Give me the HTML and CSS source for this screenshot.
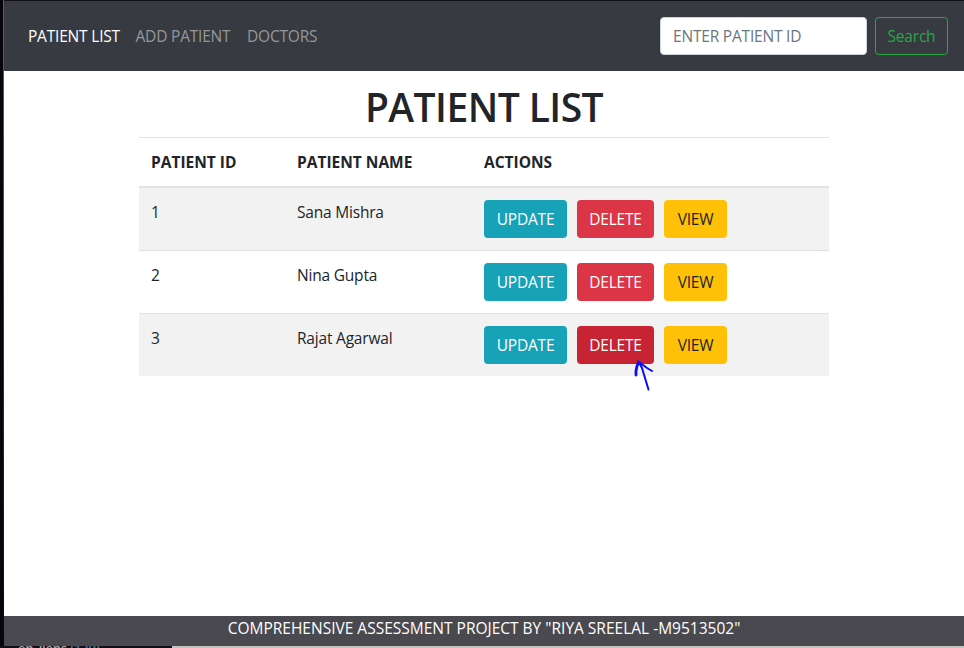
FILE: index.html
```html
<!DOCTYPE html>
<html lang="en">
<head>
<meta charset="utf-8">
<title>Patient List</title>
<link rel="stylesheet" href="styles.css">
</head>
<body>
<div class="edge"></div>
<div class="app">
  <nav class="navbar">
    <div class="links">
      <a class="active">PATIENT LIST</a>
      <a class="add">ADD PATIENT</a>
      <a class="doctors">DOCTORS</a>
    </div>
    <form class="search">
      <input type="text" placeholder="ENTER PATIENT ID">
      <button type="button" class="btn btn-search">Search</button>
    </form>
  </nav>
  <main>
    <h1>PATIENT LIST</h1>
    <table>
      <thead>
        <tr><th class="c1">PATIENT ID</th><th class="c2">PATIENT NAME</th><th class="c3">ACTIONS</th></tr>
      </thead>
      <tbody>
        <tr><td>1</td><td>Sana Mishra</td><td><div class="actions"><button class="btn update">UPDATE</button><button class="btn delete">DELETE</button><button class="btn view">VIEW</button></div></td></tr>
        <tr><td>2</td><td>Nina Gupta</td><td><div class="actions"><button class="btn update">UPDATE</button><button class="btn delete">DELETE</button><button class="btn view">VIEW</button></div></td></tr>
        <tr><td>3</td><td>Rajat Agarwal</td><td><div class="actions"><button class="btn update">UPDATE</button><button class="btn delete pressed">DELETE</button><button class="btn view">VIEW</button></div></td></tr>
      </tbody>
    </table>
  </main>
  <footer>COMPREHENSIVE ASSESSMENT PROJECT BY "RIYA SREELAL -M9513502"</footer>
</div>
<div class="taskbar"><div class="taskbar-dark"><span>en_liens</span> <span class="blue">(130)</span></div><div class="taskbar-light"></div></div>
<svg class="arrow" viewBox="0 0 24 36" width="24" height="36" fill="none" stroke="#0b0bf5" stroke-linecap="round" stroke-linejoin="round"><path stroke-width="2" d="M4.500 3.500L9 7L13 10L18 13M4.500 3.500L8 10L11 20L14.500 31.500"/><path stroke-width="2.800" d="M4.500 4.500L3 8L2 13L2 17"/></svg>
</body>
</html>
```
FILE: styles.css
```css
* { box-sizing: border-box; }
body {
  margin: 0;
  width: 964px;
  height: 648px;
  overflow: hidden;
  display: grid;
  grid-template-columns: 4px 960px;
  grid-template-rows: 646px 2px;
  font-family: "Open Sans", "Noto Sans", sans-serif;
  font-size: 15.5px;
  line-height: 24px;
  letter-spacing: -0.2px;
  color: #212529;
  background: #fff;
}
.edge {
  background: linear-gradient(#c52a50, #a02545 35%, #3a1220 75%, #08060c) right / 1px 100% no-repeat #08060c;
}
.app { display: flex; flex-direction: column; }
.navbar {
  height: 71px;
  flex: none;
  display: flex;
  align-items: center;
  justify-content: space-between;
  padding: 0 16px 0 24px;
  border-top: 1px solid #11101a;
  background: #373a41;
}
.links { display: flex; gap: 16px; color: #96989b; margin-top: -1px; }
.links a { white-space: nowrap; width: 91.5px; }
.links .add { width: 95.5px; }
.links .active { color: #fff; }
.search { display: flex; gap: 8px; margin-top: -1px; }
input {
  width: 207px;
  height: 38px;
  padding: 6px 12px;
  border: 1px solid #ced4da;
  border-radius: 4px;
  font: inherit;
  letter-spacing: -0.2px;
  background: #fff;
}
input::placeholder { color: #6c757d; opacity: 1; }
.btn {
  height: 38px;
  padding: 0;
  border: 1px solid transparent;
  border-radius: 4px;
  font: inherit;
  letter-spacing: -0.2px;
  color: #fff;
}
.btn-search { width: 73px; color: #28a745; border-color: #28a745; background: transparent; }
main { flex: 1; padding: 12px 135px 0; }
h1 {
  margin: 0;
  height: 54px;
  line-height: 48px;
  text-align: center;
  font-size: 39px;
  font-weight: 600;
  letter-spacing: -0.55px;
}
table { width: 690px; table-layout: fixed; border-collapse: separate; border-spacing: 0; }
th, td { padding: 12px; text-align: left; vertical-align: top; border-top: 1px solid #dee2e6; }
th { font-weight: 700; letter-spacing: 0; }
thead th { border-bottom: 2px solid #dee2e6; }
tbody tr:first-child td { border-top: 0; }
tbody tr:nth-child(odd) { background: #f2f2f2; }
.c1 { width: 146px; }
.c2 { width: 187px; }
.actions { display: flex; gap: 10px; }
.update { width: 83px; background: #17a2b8; }
.delete { width: 77px; background: #dc3545; }
.pressed { background: #c82333; }
.view { width: 63px; color: #212529; background: #ffc107; }
footer { height: 30px; flex: none; text-align: center; letter-spacing: 0; color: #fff; background: #4a494f; }
.taskbar { grid-column: 1 / -1; display: flex; overflow: hidden; }
.taskbar-dark { width: 172px; background: #130d14; color: #aaa; font-size: 13px; font-weight: 600; line-height: 5px; padding-left: 18px; }
.blue { color: #4b7da8; }
.taskbar-light { flex: 1; background: #c4c3c4; }
.arrow { position: absolute; left: 634px; top: 358px; }
```
